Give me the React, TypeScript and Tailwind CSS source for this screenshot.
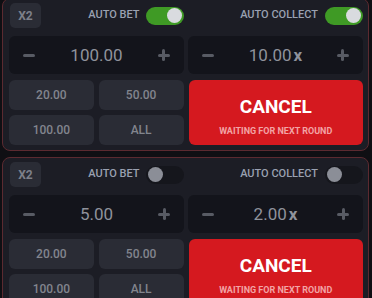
import { useState } from 'react';

const Toggle = ({ on }: { on: boolean }) => (
  <div
    className={`w-[38px] h-[18px] rounded-full p-[2px] flex items-center ${
      on ? 'bg-[#3f9a25] justify-end' : 'bg-[#15161c] justify-start'
    }`}
  >
    <div className={`w-[15px] h-[15px] rounded-full ${on ? 'bg-[#d9dbdf]' : 'bg-[#8b8e97]'}`} />
  </div>
);

const Stepper = ({ value, suffix }: { value: string; suffix?: string }) => (
  <div className="h-[38px] bg-[#13141b] rounded-[6px] flex items-center justify-between px-[14px] text-[#8f929b]">
    <span className="w-[12px] h-[3px] bg-[#585b64] rounded-sm" />
    <span className="text-[17px] font-normal leading-none">
      {value}
      {suffix && <span className="ml-[2px] font-bold">{suffix}</span>}
    </span>
    <span className="relative w-[12px] h-[12px]">
      <span className="absolute left-0 top-[4.5px] w-[12px] h-[3px] bg-[#585b64] rounded-sm" />
      <span className="absolute top-0 left-[4.5px] w-[3px] h-[12px] bg-[#585b64] rounded-sm" />
    </span>
  </div>
);

const Panel = ({
  bet,
  mult,
  autoOn,
  first,
}: {
  bet: string;
  mult: string;
  autoOn: boolean;
  first?: boolean;
}) => (
  <div
    className={`mx-[2px] w-[367px] shrink-0 border border-[#5b2a30] rounded-[8px] bg-[#1c1d25] pl-[6px] pr-[5px] pt-[4px] pb-[5px] ${
      first ? '-mt-[2px]' : ''
    }`}
  >
    {/* Header */}
    <div className="grid grid-cols-2 gap-[5px] h-[25px]">
      <div className="flex items-center">
        <div className="ml-px w-[31px] h-[25px] rounded-[5px] bg-[#2a2c35] flex items-center justify-center text-[12px] font-bold text-[#7d808a]">
          X2
        </div>
        <span className="ml-auto mr-[6px] text-[11px] font-medium text-[#9aa1b1]">AUTO BET</span>
        <Toggle on={autoOn} />
      </div>
      <div className="flex items-center justify-end">
        <span className="mr-[7px] text-[11px] font-medium text-[#9aa1b1]">AUTO COLLECT</span>
        <Toggle on={autoOn} />
      </div>
    </div>

    {/* Inputs */}
    <div className="grid grid-cols-2 gap-[4px] mt-[8px]">
      <Stepper value={bet} />
      <Stepper value={mult} suffix="x" />
    </div>

    {/* Presets + cancel */}
    <div className="grid grid-cols-2 gap-[5px] mt-[6px]">
      <div className="grid grid-cols-2 gap-[5px]">
        {['20.00', '50.00', '100.00', 'ALL'].map((v) => (
          <button
            key={v}
            className="h-[30px] rounded-[6px] bg-[#2a2c35] text-[12px] font-medium text-[#82858e]"
          >
            {v}
          </button>
        ))}
      </div>
      <button className="h-[65px] rounded-[6px] bg-[#d5191f] flex flex-col items-center justify-center pt-[8px]">
        <span className="text-[19px] font-bold text-white leading-none">CANCEL</span>
        <span className="mt-[11px] text-[9px] font-bold text-[#f2a3a5] leading-none">
          WAITING FOR NEXT ROUND
        </span>
      </button>
    </div>
  </div>
);

export default function App() {
  const [panels] = useState([
    { bet: '100.00', mult: '10.00', autoOn: true },
    { bet: '5.00', mult: '2.00', autoOn: false },
  ]);
  return (
    <div
      className="w-[372px] h-[298px] overflow-hidden bg-[#0f0f13] flex flex-col gap-[6px]"
      style={{ fontFamily: 'Roboto, "Noto Sans", sans-serif' }}
    >
      {panels.map((p, i) => (
        <Panel key={i} first={i === 0} {...p} />
      ))}
    </div>
  );
}
